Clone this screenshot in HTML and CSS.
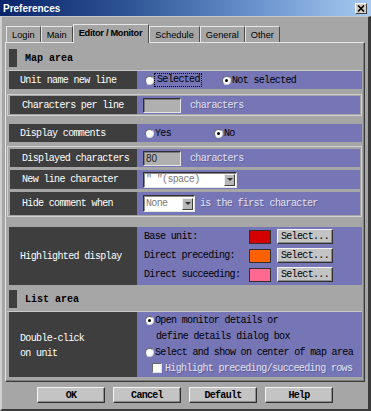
FILE: index.html
```html
<!DOCTYPE html>
<html>
<head>
<meta charset="utf-8">
<title>Preferences</title>
<link rel="stylesheet" href="styles.css">
</head>
<body>
<div class="window">
  <div class="titlebar">
    <span class="title">Preferences</span>
    <span class="close"><svg width="8" height="7" viewBox="0 0 8 7"><path d="M1 0.5 L7 6.5 M7 0.5 L1 6.5" stroke="#000" stroke-width="1.6" fill="none"/></svg></span>
  </div>
  <div class="frame">
    <div class="tabs">
      <div class="tab">Login</div>
      <div class="tab">Main</div>
      <div class="tab active">Editor / Monitor</div>
      <div class="tab">Schedule</div>
      <div class="tab">General</div>
      <div class="tab">Other</div>
    </div>
    <div class="panel">
      <div class="sec-head"><span class="marker"></span><span class="sec-title">Map area</span></div>

      <div class="row single h18">
        <div class="lbl">Unit name new line</div>
        <div class="val">
          <span class="opt opt-sel"><span class="radio"></span><span class="focus">Selected</span></span>
          <span class="opt"><span class="radio on"></span><span class="opt-text">Not selected</span></span>
        </div>
      </div>

      <div class="group g1">
        <div class="row h18">
          <div class="lbl">Characters per line</div>
          <div class="val">
            <span class="field"></span><span class="dis">characters</span>
          </div>
        </div>
      </div>

      <div class="row single h18 r-comments">
        <div class="lbl">Display comments</div>
        <div class="val">
          <span class="opt opt-yes"><span class="radio"></span><span class="opt-text">Yes</span></span>
          <span class="opt"><span class="radio on"></span><span class="opt-text">No</span></span>
        </div>
      </div>

      <div class="group g2">
        <div class="row h18">
          <div class="lbl">Displayed characters</div>
          <div class="val">
            <span class="field"><span class="field-text">80</span></span><span class="dis">characters</span>
          </div>
        </div>
        <div class="row h19">
          <div class="lbl">New line character</div>
          <div class="val">
            <span class="combo combo-wide"><span class="combo-text">" "(space)</span><span class="combo-btn"><span class="tri"></span></span></span>
          </div>
        </div>
        <div class="row h23">
          <div class="lbl">Hide comment when</div>
          <div class="val">
            <span class="combo combo-narrow"><span class="combo-text">None</span><span class="combo-btn"><span class="tri"></span></span></span><span class="dis">is the first character</span>
          </div>
        </div>
      </div>

      <div class="row single h58 r-high">
        <div class="lbl">Highlighted display</div>
        <div class="val col">
          <div class="hl-line"><span class="hl-label">Base unit:</span><span class="swatch red"></span><span class="btn small">Select...</span></div>
          <div class="hl-line"><span class="hl-label">Direct preceding:</span><span class="swatch orange"></span><span class="btn small">Select...</span></div>
          <div class="hl-line"><span class="hl-label">Direct succeeding:</span><span class="swatch pink"></span><span class="btn small">Select...</span></div>
        </div>
      </div>

      <div class="sec-head list"><span class="marker"></span><span class="sec-title">List area</span></div>

      <div class="row single h65">
        <div class="lbl lbl-multi"><span>Double-click</span><span>on unit</span></div>
        <div class="val col dbl">
          <div class="dl-line"><span class="radio on"></span><span class="opt-text">Open monitor details or</span></div>
          <div class="dl-line indent"><span class="opt-text">define details dialog box</span></div>
          <div class="dl-line"><span class="radio"></span><span class="opt-text">Select and show on center of map area</span></div>
          <div class="dl-line sub"><span class="check"></span><span class="dis">Highlight preceding/succeeding rows</span></div>
        </div>
      </div>
    </div>

    <div class="buttons">
      <span class="btn big">OK</span>
      <span class="btn big">Cancel</span>
      <span class="btn big">Default</span>
      <span class="btn big">Help</span>
    </div>
  </div>
</div>
</body>
</html>
```

FILE: styles.css
```css
* { box-sizing: border-box; }
html, body { margin: 0; padding: 0; }
body {
  width: 371px;
  height: 411px;
  overflow: hidden;
  background: #a6a6a6;
  font-family: "Liberation Mono", "DejaVu Sans Mono", monospace;
  font-size: 10px;
  letter-spacing: -0.65px;
}
.window {
  width: 371px;
  height: 411px;
  display: flex;
  flex-direction: column;
  background: #a6a6a6;
}
.titlebar {
  height: 16px;
  flex: none;
  display: flex;
  align-items: center;
  justify-content: space-between;
  padding: 0 4px 0 3px;
  background: linear-gradient(to right, #0a246a 0%, #2f5596 35%, #6c95cf 70%, #a6caf0 100%);
}
.title {
  color: #fff;
  font: bold 10px "Liberation Sans", Arial, sans-serif;
  letter-spacing: 0;
}
.close {
  width: 12px;
  height: 11px;
  background: #d4d0c8;
  border: 1px solid;
  border-color: #fff #404040 #404040 #fff;
  display: flex;
  align-items: center;
  justify-content: center;
}
.frame {
  flex: 1;
  display: flex;
  flex-direction: column;
  border-top: 1px solid #c8c8c8;
  border-left: 2px solid #d0d0d0;
  border-right: 3px solid #3a3a3a;
  border-bottom: 2px solid #3a3a3a;
}
.tabs {
  height: 25px;
  padding-top: 7px;
  padding-left: 4px;
  display: flex;
  align-items: flex-end;
  flex: none;
}
.tab {
  height: 16px;
  padding: 0 5px;
  display: flex;
  align-items: center;
  font: 9.25px "Liberation Sans", Arial, sans-serif;
  letter-spacing: 0;
  color: #000;
  background: #a6a6a6;
  border-top: 1px solid #e6e6e6;
  border-left: 1px solid #e6e6e6;
  border-right: 1px solid #4a4a4a;
}
.tab.active {
  height: 19px;
  margin-bottom: -1px;
  position: relative;
  z-index: 1;
  font-weight: bold;
  letter-spacing: -0.3px;
  padding: 0 6px 2px 5px;
}
.panel {
  height: 340px;
  flex: none;
  margin: 0 3px 0 3px;
  padding: 3px 2px 0 1px;
  border-top: 1px solid #e6e6e6;
  border-left: 1px solid #e6e6e6;
  border-right: 1px solid #3a3a3a;
  border-bottom: 1px solid #3a3a3a;
  box-shadow: inset -1px -1px 0 #808080;
  display: flex;
  flex-direction: column;
}
.sec-head {
  height: 25px;
  flex: none;
  display: flex;
  align-items: center;
  padding-left: 2px;
  border-bottom: 1px solid #c8c8c8;
}
.sec-head.list { margin-top: 2px; }
.marker {
  width: 8px;
  height: 18px;
  background: #3e3e3e;
  margin-right: 8px;
}
.sec-title {
  font-weight: bold;
  letter-spacing: 0;
  color: #000;
}
.row {
  display: flex;
  flex: none;
}
.row.single { margin-left: 2px; }
.h18 { height: 18px; }
.h19 { height: 19px; }
.h23 { height: 23px; }
.h58 { height: 58px; }
.h65 { height: 65px; }
.lbl {
  width: 128px;
  flex: none;
  background: #3e3e3e;
  color: #fff;
  padding-left: 11px;
  display: flex;
  align-items: center;
  white-space: nowrap;
}
.lbl-multi {
  flex-direction: column;
  align-items: flex-start;
  justify-content: center;
  line-height: 15px;
  padding-top: 2px;
}
.val {
  flex: 1;
  background: #7676b6;
  color: #000;
  display: flex;
  align-items: center;
  padding-left: 8px;
  white-space: nowrap;
}
.val.col {
  flex-direction: column;
  align-items: flex-start;
  justify-content: flex-start;
}
.group {
  flex: none;
  border: 1px solid #cfcfcf;
  padding: 1px 1px 1px 2px;
  display: flex;
  flex-direction: column;
  gap: 3px;
}
.group .lbl { width: 127px; padding-left: 12px; }
.group .val { padding-left: 6px; }
.g1 { margin-top: 5px; }
.r-comments { margin-top: 8px; }
.g2 { margin-top: 4px; padding-top: 2px; }
.r-high { margin-top: 10px; }

.opt { display: flex; align-items: center; }
.opt-sel { width: 77px; }
.opt-yes { width: 69px; }
.opt-text { margin-left: 1px; }
.focus {
  margin-left: 0;
  padding: 0 1px 0 2px;
  border: 1px dotted #000;
  line-height: 12px;
}
.radio {
  width: 9px;
  height: 9px;
  flex: none;
  border-radius: 50%;
  background: #fff;
  border: 1px solid #6a6a6a;
  border-bottom-color: #d8d8d8;
  border-right-color: #d8d8d8;
  position: relative;
}
.radio.on::after {
  content: "";
  position: absolute;
  left: 2px;
  top: 2px;
  width: 3px;
  height: 3px;
  border-radius: 50%;
  background: #000;
}
.check {
  width: 10px;
  height: 10px;
  flex: none;
  background: #fff;
  border: 1px solid;
  border-color: #6a6a6a #e0e0e0 #e0e0e0 #6a6a6a;
  margin-right: 3px;
}
.field {
  width: 38px;
  height: 15px;
  flex: none;
  background: #b0b0b0;
  border: 1px solid;
  border-color: #303030 #e6e6e6 #e6e6e6 #303030;
  box-shadow: inset 1px 1px 0 #7a7a7a;
  display: flex;
  align-items: center;
  margin-right: 9px;
}
.field-text {
  font: 10px "Liberation Sans", Arial, sans-serif;
  letter-spacing: 0;
  color: #202020;
  padding-left: 2px;
}
.dis {
  color: #e2e2f2;
  text-shadow: 1px 1px 0 rgba(70, 70, 120, 0.55);
}
.combo {
  height: 16px;
  flex: none;
  background: #fff;
  border: 1px solid;
  border-color: #303030 #e6e6e6 #e6e6e6 #303030;
  box-shadow: inset 1px 1px 0 #8a8a8a;
  display: flex;
  align-items: center;
  justify-content: space-between;
  padding: 1px 1px 1px 2px;
}
.combo-wide { width: 94px; }
.combo-narrow { width: 52px; margin-right: 5px; height: 17px; }
.combo-text { color: #7a7a7a; }
.combo-btn {
  width: 11px;
  height: 12px;
  background: #b8b8b8;
  border: 1px solid;
  border-color: #eeeeee #404040 #404040 #eeeeee;
  display: flex;
  align-items: center;
  justify-content: center;
}
.tri {
  width: 0;
  height: 0;
  border-left: 3px solid transparent;
  border-right: 3px solid transparent;
  border-top: 3px solid #303030;
}
.r-high .val { padding-left: 7px; }
.hl-line {
  height: 19px;
  display: flex;
  align-items: center;
}
.hl-label { width: 105px; }
.swatch {
  width: 22px;
  height: 14px;
  border: 1px solid #303030;
  margin-right: 6px;
}
.red { background: #d40000; }
.orange { background: #ff6000; }
.pink { background: #ff6890; }
.btn {
  display: flex;
  align-items: center;
  justify-content: center;
  background: #c4c4c4;
  border: 1px solid;
  border-color: #f4f4f4 #303030 #303030 #f4f4f4;
  box-shadow: inset -1px -1px 0 #8a8a8a;
  color: #000;
}
.btn.small { width: 56px; height: 15px; }
.dbl .dl-line {
  height: 16px;
  display: flex;
  align-items: center;
}
.dl-line.indent { padding-left: 10px; }
.dl-line.sub { padding-left: 7px; }
.buttons {
  margin-top: 5px;
  display: flex;
  justify-content: center;
  gap: 8px;
}
.btn.big {
  width: 68px;
  height: 16px;
  font-weight: bold;
  letter-spacing: -0.7px;
}
```
